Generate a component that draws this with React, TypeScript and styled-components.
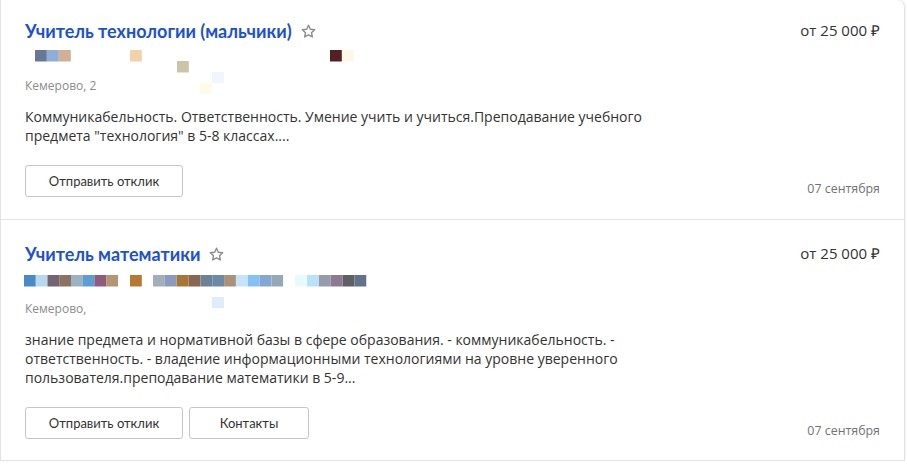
import React from "react";
import styled, { createGlobalStyle } from "styled-components";

const Global = createGlobalStyle`
  html, body { margin: 0; padding: 0; background: #fff; }
  body { font-family: "Open Sans", Lato, sans-serif; color: #333; }
`;

const List = styled.div`
  box-sizing: border-box;
  width: 905px;
  border-left: 1px solid #e3e3e3;
  border-right: 1px solid #e3e3e3;
  border-top-right-radius: 8px;
  box-shadow: 1px -1px 3px rgba(0, 0, 0, 0.06);
  background: #fff;
`;

const Card = styled.div<{ $pt: number; $pb: number }>`
  display: flex;
  justify-content: space-between;
  padding: ${(p) => p.$pt}px 24px ${(p) => p.$pb}px 24px;
  border-bottom: 1px solid #e3e3e3;
`;

const Main = styled.div`
  display: flex;
  flex-direction: column;
  width: 640px;
`;

const Side = styled.div`
  display: flex;
  flex-direction: column;
  justify-content: space-between;
  align-items: flex-end;
`;

const TitleRow = styled.div`
  display: flex;
  align-items: center;
  gap: 8px;
  height: 24px;
`;

const Title = styled.a`
  font-family: Lato, sans-serif;
  font-size: 18px;
  font-weight: 700;
  color: #1c50d6;
  text-decoration: none;
  line-height: 24px;
`;

const Star = styled.svg`
  width: 17px;
  height: 17px;
  display: block;
  margin-top: 1px;
`;

const Mosaic = styled.svg`
  display: block;
  margin-top: 7px;
  overflow: visible;
`;

const Location = styled.div`
  position: relative;
  font-size: 12px;
  color: #8c8c8c;
  line-height: 16px;
  margin-top: 5px;
`;

const Blot = styled.span<{ $x: number; $y: number; $c: string }>`
  position: absolute;
  left: ${(p) => p.$x}px;
  top: ${(p) => p.$y}px;
  width: 12px;
  height: 11px;
  background: ${(p) => p.$c};
`;

const Body = styled.p`
  margin: 13px 0 0;
  font-size: 14px;
  line-height: 19px;
  color: #333;
`;

const Buttons = styled.div`
  display: flex;
  gap: 6px;
  margin-top: 20px;
`;

const Button = styled.button<{ $w: number }>`
  box-sizing: border-box;
  width: ${(p) => p.$w}px;
  height: 32px;
  border: 1px solid #c6c6c6;
  border-radius: 3px;
  background: #fff;
  font-family: Lato, sans-serif;
  font-size: 13px;
  color: #333;
  padding: 0;
`;

const Price = styled.div`
  font-size: 15px;
  color: #333;
  line-height: 20px;
  margin-top: 1px;
`;

const DateText = styled.div`
  font-size: 12.4px;
  color: #737373;
  line-height: 16px;
`;

type Sq = [number, number, string];

const StarIcon = () => (
  <Star viewBox="0 0 24 24">
    <path
      d="M12 3.2l2.6 5.6 6.1.7-4.5 4.2 1.2 6-5.4-3-5.4 3 1.2-6-4.5-4.2 6.1-.7z"
      fill="none"
      stroke="#8c8c8c"
      strokeWidth="2"
      strokeLinejoin="round"
    />
  </Star>
);

const MosaicView = ({ squares }: { squares: Sq[] }) => (
  <Mosaic width="360" height="23">
    {squares.map(([x, y, c], i) => (
      <rect key={i} x={x} y={y} width="11.8" height="11.5" fill={c} />
    ))}
  </Mosaic>
);

const sq1: Sq[] = [
  [10, 0, "#667896"],
  [22, 0, "#8eaed6"],
  [34, 0, "#d3b093"],
  [105, 0, "#f1d3aa"],
  [152, 11, "#cdc3a6"],
  [305, 0, "#532125"],
  [317, 0, "#fdf8e6"],
];

const row2 = [
  "#4a89c8", "#b8d8ec", "#726473", "#8a7361", "#99b3c0", "#5b9dd4", "#905a7a", "#b39674",
];
const row2b = [
  "#a1afbb", "#8b9bc0", "#a77634", "#876750", "#6f8196", "#6d89a5", "#a9917a", "#c6e4f8",
  "#84c2f5", "#86a6d2", "#94a9b7", "#ffffff", "#e6fbfd", "#bae2f6", "#969cab", "#8b7a90",
  "#5f6066", "#617388",
];
const sq2: Sq[] = [
  ...row2.map((c, i) => [-1 + i * 11.75, 2, c] as Sq),
  [105, 2, "#b77932"],
  ...row2b.map((c, i) => [128 + i * 11.85, 2, c] as Sq),
];

export default function App() {
  return (
    <>
      <Global />
      <List>
        <Card $pt={19} $pb={22}>
          <Main>
            <TitleRow>
              <Title>Учитель технологии (мальчики)</Title>
              <StarIcon />
            </TitleRow>
            <MosaicView squares={sq1} />
            <Location>
              Кемерово, 2
              <Blot $x={187} $y={-6} $c="#f1f6fd" />
              <Blot $x={175} $y={5} $c="#fefbe8" />
            </Location>
            <Body>
              Коммуникабельность. Ответственность. Умение учить и учиться.Преподавание учебного
              предмета "технология" в 5-8 классах....
            </Body>
            <Buttons>
              <Button $w={158}>Отправить отклик</Button>
            </Buttons>
          </Main>
          <Side>
            <Price>от 25 000 ₽</Price>
            <DateText>07 сентября</DateText>
          </Side>
        </Card>
        <Card $pt={22} $pb={21}>
          <Main>
            <TitleRow>
              <Title>Учитель математики</Title>
              <StarIcon />
            </TitleRow>
            <MosaicView squares={sq2} />
            <Location>
              Кемерово,
              <Blot $x={187} $y={-4} $c="#e0ebfb" />
            </Location>
            <Body>
              знание предмета и нормативной базы в сфере образования. - коммуникабельность. -
              ответственность. - владение информационными технологиями на уровне уверенного
              пользователя.преподавание математики в 5-9...
            </Body>
            <Buttons>
              <Button $w={158}>Отправить отклик</Button>
              <Button $w={120}>Контакты</Button>
            </Buttons>
          </Main>
          <Side>
            <Price>от 25 000 ₽</Price>
            <DateText>07 сентября</DateText>
          </Side>
        </Card>
      </List>
    </>
  );
}
